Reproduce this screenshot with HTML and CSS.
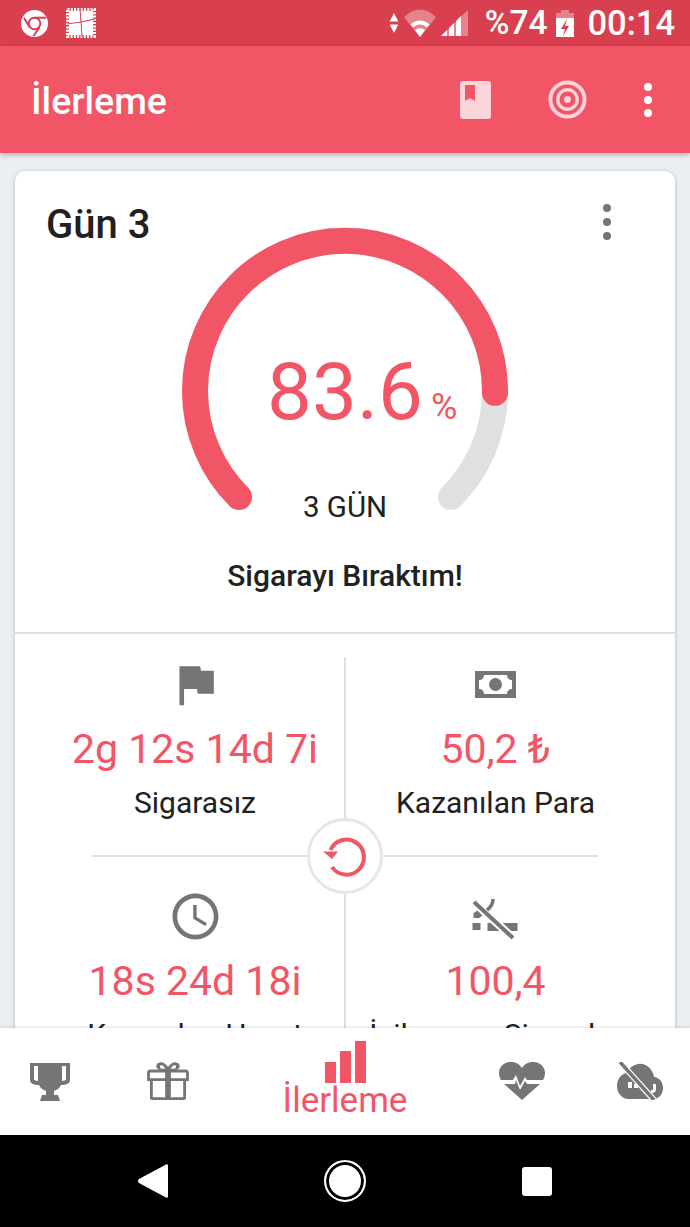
FILE: index.html
```html
<!DOCTYPE html>
<html lang="tr">
<head>
    <meta charset="UTF-8">
    <meta name="viewport" content="width=device-width, initial-scale=1.0">
    <title>İlerleme</title>
    <link rel="stylesheet" href="styles.css">
</head>
<body>

    <!-- phone status bar -->
    <div class="status-bar">
        <div class="status-left">
            <svg class="icon-chrome" viewBox="0 0 30 30">
                <circle cx="15" cy="15" r="14" fill="#fff"/>
                <circle cx="15" cy="15" r="6" fill="none" stroke="#d9404f" stroke-width="2"/>
                <path d="M15 9H27M10 19L4 9M20 19L14 28" stroke="#d9404f" stroke-width="2" fill="none"/>
            </svg>
            <svg class="icon-quilt" viewBox="0 0 30 30">
                <rect x="3" y="3" width="24" height="24" fill="#fff"/>
                <rect x="1.500" y="1.500" width="27" height="27" fill="none" stroke="#fff" stroke-width="3" stroke-dasharray="2 1.300"/>
                <path d="M14 1l1 13-14 2M15 14l14-3M15 14l1 15" fill="none" stroke="#d9404f" stroke-width="1"/>
            </svg>
        </div>
        <div class="status-right">
            <svg class="icon-arrows" viewBox="0 0 10 22">
                <path d="M5 0l4.500 9H.5zM.5 12h9L5 21z" fill="#fff"/>
            </svg>
            <svg class="icon-wifi" viewBox="0 0 32 28">
                <path d="M0 8.500C9-2 23-2 32 8.500L16 28z" fill="#fff" opacity=".35"/>
                <path d="M6.500 15.500C12 10 20 10 25.500 15.500l-2.500 3C18.500 14.500 13.500 14.500 9 18.500zM11 21c3-2.500 7-2.500 10 0l-5 7z" fill="#fff"/>
            </svg>
            <svg class="icon-signal" viewBox="0 0 27 26">
                <path d="M0 26L27 0v26z" fill="#fff" opacity=".35"/>
                <path d="M0 26l6-6v6zM8 26v-8l5-5v13zM15 26V11l5-5v20z" fill="#fff"/>
            </svg>
            <span class="status-text status-battery">%74</span>
            <svg class="icon-battery" viewBox="0 0 18 27">
                <path d="M5 0h8v3h5v6H0V3h5z" fill="#fff" opacity=".35"/>
                <path d="M0 8h18v19H0z" fill="#fff"/>
                <path d="M11 9l-6 10h4l-2 7 6-10H9z" fill="#d9404f"/>
            </svg>
            <span class="status-text status-time">00:14</span>
        </div>
    </div>

    <header class="app-bar">
        <h1 class="app-title">İlerleme</h1>
        <svg class="icon-book" viewBox="0 0 31 38">
            <path fill-rule="evenodd" d="M3 0h25a3 3 0 0 1 3 3v32a3 3 0 0 1-3 3H3a3 3 0 0 1-3-3V3a3 3 0 0 1 3-3zM5 4v16l5-3 5 3V4z" fill="#fcd5da"/>
        </svg>
        <svg class="icon-target" viewBox="0 0 40 40">
            <circle cx="20" cy="20" r="17.500" fill="none" stroke="#fcd5da" stroke-width="4"/>
            <circle cx="20" cy="20" r="10" fill="none" stroke="#fcd5da" stroke-width="3.500"/>
            <circle cx="20" cy="20" r="3.500" fill="#fcd5da"/>
        </svg>
        <div class="dots dots-light"><i></i><i></i><i></i></div>
    </header>

    <main class="content">
        <section class="card">
            <div class="card-top">
                <h2 class="day-title">Gün 3</h2>
                <div class="dots dots-grey"><i></i><i></i><i></i></div>
            </div>

            <div class="gauge">
                <svg class="gauge-arc" viewBox="0 0 326 283">
                    <path d="M57 270A150 150 0 1 1 269 270" fill="none" stroke="#e0e0e0" stroke-width="26" stroke-linecap="round"/>
                    <path d="M57 270A150 150 0 1 1 269 270" fill="none" stroke="#f25565" stroke-width="26" stroke-linecap="round" pathLength="100" stroke-dasharray="83.6 100"/>
                </svg>
                <div class="gauge-value">83.6<span class="gauge-unit">%</span></div>
                <div class="gauge-days">3 GÜN</div>
            </div>

            <p class="quit-label">Sigarayı Bıraktım!</p>

            <div class="stats">
                <div class="stat">
                    <svg class="stat-icon" viewBox="0 0 24 24"><path d="M14.400 6L14 4H5v17h2v-7h5.600l.4 2h7V6z" fill="#757575"/></svg>
                    <div class="stat-value">2g 12s 14d 7i</div>
                    <div class="stat-label">Sigarasız</div>
                </div>
                <div class="stat stat-right">
                    <svg class="stat-icon" viewBox="0 0 55 55">
                        <path d="M7 14h41v27H7z" fill="#757575"/>
                        <path d="M16 18h23c0 3 2 5 5 5v9c-3 0-5 2-5 5H16c0-3-2-5-5-5v-9c3 0 5-2 5-5z" fill="#fff"/>
                        <circle cx="27.500" cy="27.500" r="6.500" fill="#757575"/>
                    </svg>
                    <div class="stat-value">50,2 ₺</div>
                    <div class="stat-label">Kazanılan Para</div>
                </div>
                <div class="stat stat-lower">
                    <svg class="stat-icon" viewBox="0 0 24 24">
                        <path d="M11.990 2C6.470 2 2 6.480 2 12s4.470 10 9.990 10C17.520 22 22 17.520 22 12S17.520 2 11.990 2zM12 20c-4.420 0-8-3.580-8-8s3.580-8 8-8 8 3.580 8 8-3.580 8-8 8z" fill="#757575"/>
                        <path d="M12.500 7H11v6l5.250 3.150.75-1.230-4.500-2.670z" fill="#757575"/>
                    </svg>
                    <div class="stat-value">18s 24d 18i</div>
                    <div class="stat-label">Kazanılan Hayat</div>
                </div>
                <div class="stat stat-right stat-lower">
                    <svg class="stat-icon" viewBox="0 0 55 55">
                        <path d="M4.500 34h8v7h-8zM19.500 34h30v8h-30z" fill="#757575"/>
                        <path d="M5.500 24c2-1 4-2 5-5l4 7-3 3H5.500z" fill="#757575"/>
                        <path d="M6 13l39 36" stroke="#fff" stroke-width="8"/>
                        <path d="M6 13l39 36" stroke="#757575" stroke-width="4"/>
                        <path d="M25 10c0 4-2 8-6 11" stroke="#757575" stroke-width="3.500" fill="none"/>
                    </svg>
                    <div class="stat-value">100,4</div>
                    <div class="stat-label">İçilmeyen Sigaralar</div>
                </div>
                <div class="stats-rule"></div>
                <button class="reset-btn" type="button">
                    <svg class="reset-icon" viewBox="0 0 44 44">
                        <path d="M7.500 16A17.500 17.500 0 1 1 9 33" fill="none" stroke="#f25565" stroke-width="4"/>
                        <path d="M0 17.500h15L9 25z" fill="#f25565"/>
                    </svg>
                </button>
            </div>
        </section>
    </main>

    <nav class="bottom-nav">
        <svg class="nav-icon nav-trophy" viewBox="0 0 40 40">
            <path fill-rule="evenodd" d="M0 1h40v17c0 3-3 5-9 5-1 3-4 5-7 6v4h4l2 6H10l2-6h4v-4c-3-1-6-3-7-6-6 0-9-2-9-5zM4 4v13c0 1 2 2 4 2V4zM32 4v15c2 0 4-1 4-2V4z" fill="#757575"/>
        </svg>
        <svg class="nav-icon nav-gift" viewBox="0 0 44 40">
            <path fill-rule="evenodd" d="M3 8h10c-3-1-4-3-3-5 1-3 6-4 9-1l3 3 3-3c3-3 8-2 9 1 1 2 0 4-3 5h10c1 0 3 1 3 3v9h-3v18c0 1-1 2-2 2H5c-1 0-2-1-2-2V20H0v-9c0-2 2-3 3-3zM3 11v6h16v-6zM25 11v6h16v-6zM6 20v17h13V20zM25 20v17h13V20zM15 3.500c-2 0-2 3 0 3.500h4c-1-2-2-3.500-4-3.500zM29 3.500c-2 0-3 1.500-4 3.500h4c2-.5 2-3.500 0-3.500z" fill="#757575"/>
        </svg>
        <div class="nav-active">
            <div class="nav-bars"><i class="bar-low"></i><i class="bar-mid"></i><i class="bar-high"></i></div>
            <span class="nav-active-label">İlerleme</span>
        </div>
        <svg class="nav-icon nav-heart" viewBox="0 0 46 38">
            <path d="M23 6C19 0 14 0 11 0 5 0 0 5 0 11c0 3 1 5 2 7h12l3-5 4 11 5-9 2 3h16c1-2 2-4 2-7 0-6-5-11-11-11-3 0-8 0-12 6zM5 22l18 16 18-16H28l-2-3-5 9-4-10-1 4z" fill="#757575"/>
        </svg>
        <svg class="nav-icon nav-cloud" viewBox="0 0 46 38">
            <path transform="translate(0 -7) scale(1.917 2.200)" d="M19.350 10.040C18.670 6.590 15.640 4 12 4 9.110 4 6.600 5.640 5.350 8.040 2.340 8.360 0 10.910 0 14c0 3.310 2.690 6 6 6h13c2.760 0 5-2.240 5-5 0-2.640-2.050-4.780-4.650-4.960z" fill="#757575"/>
            <path d="M11 20h4v6h-4zM17 22h4v4h-4zM36 22h3v6c0 2-2 3-5 3v-3c1 0 2 0 2-1z" fill="#fff"/>
            <path d="M3 0l34 38" stroke="#fff" stroke-width="6"/>
            <path d="M3 0l34 38" stroke="#757575" stroke-width="3.500"/>
        </svg>
    </nav>

    <!-- android buttons -->
    <div class="system-nav">
        <svg class="sys-back" viewBox="0 0 30 36"><path d="M28 1.500c1-.5 2 0 2 1.500v30c0 1.500-1 2-2 1.500L1 20c-1.300-1-1.300-3 0-4z" fill="#fff"/></svg>
        <div class="sys-home"></div>
        <div class="sys-square"></div>
    </div>

</body>
</html>
```

FILE: styles.css
```css
* {
    box-sizing: border-box;
}

body {
    margin: 0;
    height: 1227px;
    width: 690px;
    overflow: hidden;
    display: flex;
    flex-direction: column;
    font-family: Roboto, sans-serif;
    background-color: #eceff1;
}

svg {
    display: block;
    flex: none;
}

/* status bar */
.status-bar {
    height: 46px;
    flex: none;
    display: flex;
    justify-content: space-between;
    align-items: center;
    padding: 0 15px 0 20px;
    background-color: #d9404f;
}

.status-left,
.status-right {
    display: flex;
    align-items: center;
}

.status-text {
    color: #fff;
    font-weight: 500;
    line-height: 46px;
}

.status-battery {
    margin-right: 9px;
    font-size: 33.500px;
}

.status-time {
    font-size: 34.500px;
}

.icon-chrome {
    width: 29px;
    height: 29px;
    margin-right: 17px;
}

.icon-quilt {
    width: 30px;
    height: 30px;
}

.icon-arrows {
    width: 10px;
    height: 21px;
    margin-right: 5px;
}

.icon-wifi {
    width: 32px;
    height: 28px;
    margin-right: 5px;
}

.icon-signal {
    width: 27px;
    height: 26px;
    margin-right: 17px;
}

.icon-battery {
    width: 18px;
    height: 27px;
    margin-right: 13px;
}

/* app bar */
.app-bar {
    height: 107px;
    flex: none;
    display: flex;
    align-items: center;
    padding: 0 38px 0 31px;
    background-color: #f25565;
    box-shadow: 0 2px 5px rgba(0, 0, 0, 0.25);
    position: relative;
    z-index: 2;
}

.app-title {
    flex: 1;
    margin: 2px 0 0;
    color: #fff;
    font-size: 37.500px;
    font-weight: 500;
}

.icon-book {
    width: 31px;
    height: 38px;
    margin-right: 57px;
}

.icon-target {
    width: 39px;
    height: 39px;
    margin-right: 57px;
}

.dots {
    display: flex;
    flex-direction: column;
    gap: 5px;
}

.dots i {
    width: 8px;
    height: 8px;
    border-radius: 50%;
}

.dots-light i {
    background-color: #fff;
}

.dots-grey {
    gap: 6px;
    margin-bottom: 4px;
}

.dots-grey i {
    background-color: #757575;
}

/* card */
.content {
    flex: 1;
    min-height: 0;
    overflow: hidden;
    padding: 18px 15px 0;
}

.card {
    background-color: #fff;
    border-radius: 10px;
    box-shadow: 0 1px 4px rgba(0, 0, 0, 0.25);
}

.card-top {
    height: 76px;
    margin-bottom: -20px;
    display: flex;
    justify-content: space-between;
    align-items: center;
    padding: 30px 64px 0 31px;
}

.day-title {
    margin: 0;
    font-size: 40px;
    font-weight: 500;
    color: #212121;
}

.gauge {
    position: relative;
    width: 326px;
    height: 283px;
    margin: 0 auto;
}

.gauge-value {
    position: absolute;
    left: 85px;
    top: 115px;
    color: #f25565;
    font-size: 80px;
    line-height: 100px;
    white-space: nowrap;
}

.gauge-unit {
    margin-left: 8px;
    font-size: 36px;
}

.gauge-days {
    position: absolute;
    left: 0;
    right: 0;
    top: 263px;
    text-align: center;
    color: #212121;
    font-size: 29.500px;
    line-height: 34px;
}

.quit-label {
    margin: 0;
    padding: 49px 0 39px;
    text-align: center;
    color: #212121;
    font-size: 30px;
    font-weight: 500;
    line-height: 34px;
    border-bottom: 2px solid #e0e0e0;
}

/* stats */
.stats {
    position: relative;
    display: grid;
    grid-template-columns: 300px 300px;
    grid-auto-rows: 199px;
    margin: 23px 30px 0;
}

.stat {
    display: flex;
    flex-direction: column;
    align-items: center;
}

.stat-lower {
    padding-top: 33px;
}

.stat-right {
    margin-left: -1px;
    border-left: 2px solid #e0e0e0;
}

.stat-icon {
    width: 55px;
    height: 55px;
}

.stat-value {
    margin-top: 14px;
    color: #f25565;
    font-size: 41px;
    line-height: 47px;
}

.stat-label {
    margin-top: 13px;
    color: #212121;
    font-size: 30px;
    line-height: 34px;
    white-space: nowrap;
}

.stats-rule {
    position: absolute;
    left: 47px;
    right: 47px;
    top: 198px;
    height: 2px;
    background-color: #e0e0e0;
}

.reset-btn {
    position: absolute;
    left: 262px;
    top: 161px;
    width: 76px;
    height: 76px;
    padding: 0;
    display: flex;
    align-items: center;
    justify-content: center;
    background-color: #fff;
    border: 3px solid #e6e6e6;
    border-radius: 50%;
}

.reset-icon {
    width: 44px;
    height: 44px;
}

/* bottom nav */
.bottom-nav {
    height: 107px;
    flex: none;
    position: relative;
    z-index: 2;
    display: grid;
    grid-template-columns: 100px 136px 218px 136px 100px;
    justify-items: center;
    align-items: start;
    background-color: #fff;
    box-shadow: 0 -1px 3px rgba(0, 0, 0, 0.12);
}

.nav-icon {
    margin-top: 34px;
}

.nav-trophy {
    width: 40px;
    height: 40px;
}

.nav-gift {
    width: 44px;
    height: 38px;
}

.nav-heart {
    width: 46px;
    height: 38px;
}

.nav-cloud {
    width: 46px;
    height: 38px;
}

.nav-active {
    display: flex;
    flex-direction: column;
    align-items: center;
    padding-top: 13px;
}

.nav-bars {
    display: flex;
    align-items: flex-end;
    gap: 4px;
    height: 42px;
}

.nav-bars i {
    width: 11px;
    background-color: #f25565;
}

.bar-low {
    height: 21px;
}

.bar-mid {
    height: 32px;
}

.bar-high {
    height: 42px;
}

.nav-active-label {
    color: #f25565;
    font-size: 35px;
    line-height: 36px;
}

/* android buttons */
.system-nav {
    height: 92px;
    flex: none;
    position: relative;
    z-index: 2;
    display: grid;
    grid-template-columns: 138px 30px 156px 42px 156px 30px 138px;
    align-items: center;
    background-color: #000;
}

.sys-back {
    grid-column: 2;
    width: 30px;
    height: 36px;
}

.sys-home {
    grid-column: 4;
    width: 42px;
    height: 42px;
    border: 2px solid #fff;
    border-radius: 50%;
    background-color: #fff;
    box-shadow: inset 0 0 0 3px #000;
}

.sys-square {
    grid-column: 6;
    width: 30px;
    height: 29px;
    border-radius: 3px;
    background-color: #fff;
}
```
